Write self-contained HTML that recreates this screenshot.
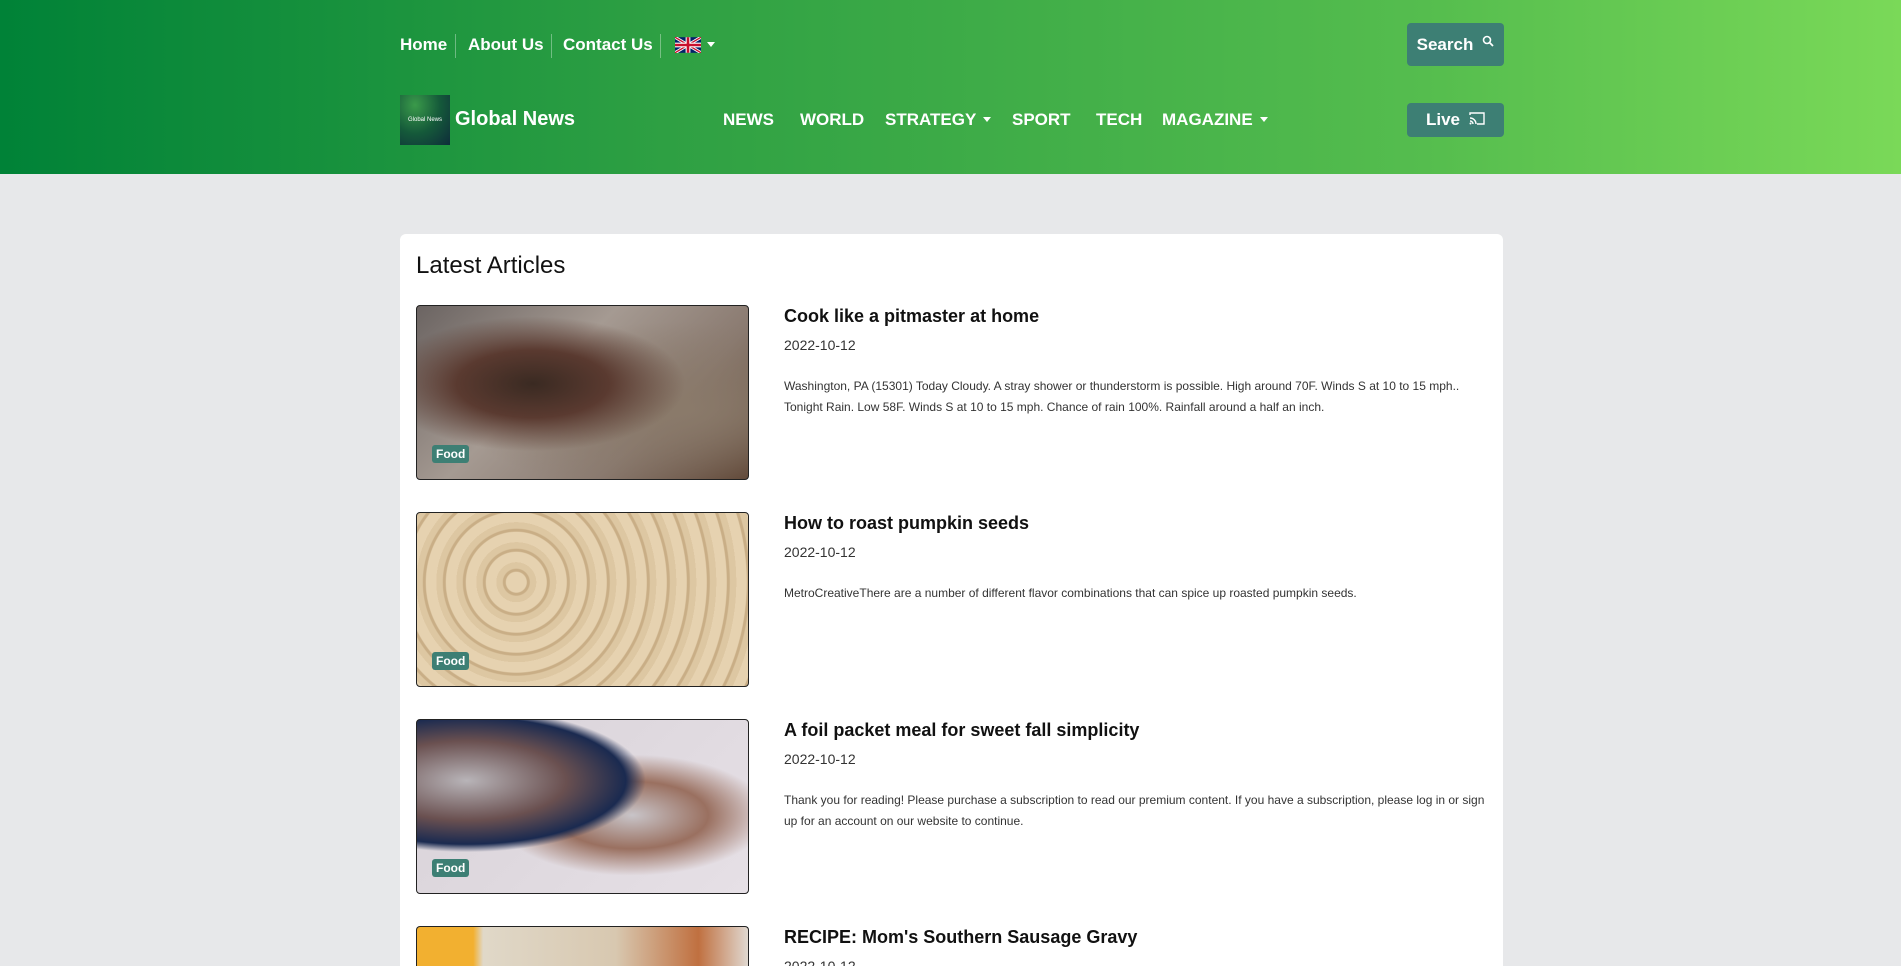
<!DOCTYPE html>
<html><head><meta charset="utf-8"><style>
*{box-sizing:border-box;margin:0;padding:0}
html,body{width:1901px;height:966px;overflow:hidden}
body{background:#e7e8ea;font-family:"Liberation Sans",Arial,sans-serif}
#w{position:relative;width:1901px;height:966px;overflow:hidden}
.hdr{position:absolute;left:0;top:0;width:1901px;height:174px;background:linear-gradient(90deg,#008237 0%,#2ea043 35%,#55bd4e 75%,#7ad958 100%)}
.a{position:absolute;color:#fff;font-weight:bold;white-space:nowrap}
.top{font-size:17px;top:35px}
.sep{position:absolute;top:34px;width:1px;height:24px;background:rgba(255,255,255,.35)}
.nav{font-size:17px;top:110px}
.caret{display:inline-block;border-left:4.5px solid transparent;border-right:4.5px solid transparent;border-top:5px solid #fff;vertical-align:middle;margin-left:7px;margin-top:-3px}
.btn{position:absolute;left:1407px;width:97px;background:#3d7f74;border-radius:4px;color:#fff;font-weight:bold;font-size:17px;display:flex;align-items:center;justify-content:center}
.card{position:absolute;left:400px;top:234px;width:1103px;height:732px;background:#fff;border-radius:6px 6px 0 0}
h2{position:absolute;left:416px;top:252px;font-size:24px;font-weight:normal;color:#111}
.img{position:absolute;left:416px;width:333px;height:175px;border:1px solid #222;border-radius:4px;overflow:hidden}
.badge{position:absolute;left:15px;bottom:16px;background:#3d7f74;color:#fff;font-size:12px;font-weight:bold;padding:2px 4px;border-radius:3px}
.t{position:absolute;left:784px;font-size:18px;font-weight:bold;color:#111}
.d{position:absolute;left:784px;font-size:14px;color:#333}
.p{position:absolute;left:784px;width:710px;font-size:12px;line-height:21px;color:#333}
</style></head><body><div id="w">
<div class="hdr"></div>
<div class="a top" style="left:400px">Home</div>
<div class="sep" style="left:455px"></div>
<div class="a top" style="left:468px">About Us</div>
<div class="sep" style="left:551px"></div>
<div class="a top" style="left:563px">Contact Us</div>
<div class="sep" style="left:660px"></div>
<svg style="position:absolute;left:675px;top:37px" width="26" height="16" viewBox="0 0 60 36"><rect width="60" height="36" fill="#012169"/><path d="M0,0L60,36M60,0L0,36" stroke="#fff" stroke-width="7"/><path d="M0,0L60,36M60,0L0,36" stroke="#C8102E" stroke-width="3"/><path d="M30,0V36M0,18H60" stroke="#fff" stroke-width="11"/><path d="M30,0V36M0,18H60" stroke="#C8102E" stroke-width="6"/></svg>
<span class="caret" style="position:absolute;left:707px;top:42px;margin:0"></span>

<div class="btn" style="top:23px;height:43px">Search <svg style="margin-left:9px;margin-top:-8px" width="12" height="12" viewBox="0 0 12 12"><circle cx="5" cy="5" r="3.5" fill="none" stroke="#fff" stroke-width="1.6"/><path d="M7.5 7.5L11 11" stroke="#fff" stroke-width="1.8"/></svg></div>
<div class="btn" style="top:103px;height:34px">Live <svg style="margin-left:9px;margin-top:-4px" width="16" height="13" viewBox="0 0 16 13"><path d="M1 3V1h14v11H8" fill="none" stroke="#fff" stroke-width="1.4"/><path d="M1 6a6 6 0 0 1 6 6M1 9a3 3 0 0 1 3 3" fill="none" stroke="#fff" stroke-width="1.4"/><circle cx="1.5" cy="11.5" r="1" fill="#fff"/></svg></div>

<div style="position:absolute;left:400px;top:95px;width:50px;height:50px;background:radial-gradient(ellipse at 30% 20%,#3a9a4a,#155a3a 50%,#0e2c3a);display:flex;align-items:center;justify-content:center;color:#fff;font-size:6px">Global News</div>
<div class="a" style="left:455px;top:108px;font-size:20px">Global News</div>

<div class="a nav" style="left:723px">NEWS</div>
<div class="a nav" style="left:800px">WORLD</div>
<div class="a nav" style="left:885px">STRATEGY<span class="caret"></span></div>
<div class="a nav" style="left:1012px">SPORT</div>
<div class="a nav" style="left:1096px">TECH</div>
<div class="a nav" style="left:1162px">MAGAZINE<span class="caret"></span></div>

<div class="card"></div>
<h2>Latest Articles</h2>

<div class="img" style="top:305px;background:radial-gradient(ellipse at 35% 45%,#3a2a22 0%,#5a3a30 25%,transparent 50%),radial-gradient(ellipse at 80% 60%,#8a7a6a,transparent 60%),linear-gradient(135deg,#6b6462,#a59a92 40%,#8a7a70 70%,#5a4030)"><span class="badge">Food</span></div>
<div class="t" style="top:306px">Cook like a pitmaster at home</div>
<div class="d" style="top:337px">2022-10-12</div>
<div class="p" style="top:376px">Washington, PA (15301) Today Cloudy. A stray shower or thunderstorm is possible. High around 70F. Winds S at 10 to 15 mph.. Tonight Rain. Low 58F. Winds S at 10 to 15 mph. Chance of rain 100%. Rainfall around a half an inch.</div>

<div class="img" style="top:512px;background:repeating-radial-gradient(circle at 30% 40%,#e6d2b0 0 10px,#c9ae86 11px 13px,#ddc7a2 14px 20px),#d8c19c"><span class="badge">Food</span></div>
<div class="t" style="top:513px">How to roast pumpkin seeds</div>
<div class="d" style="top:544px">2022-10-12</div>
<div class="p" style="top:583px">MetroCreativeThere are a number of different flavor combinations that can spice up roasted pumpkin seeds.</div>

<div class="img" style="top:719px;background:radial-gradient(ellipse at 15% 35%,#b8b4b8,#6a5050 25%,#1a2a50 40%,transparent 45%),radial-gradient(ellipse at 65% 55%,#c8c4c8,#9a7060 25%,transparent 45%),radial-gradient(ellipse at 40% 35%,#c07850 0,#c07850 12%,transparent 18%),linear-gradient(135deg,#d8d2d8,#e6e0e6)"><span class="badge">Food</span></div>
<div class="t" style="top:720px">A foil packet meal for sweet fall simplicity</div>
<div class="d" style="top:751px">2022-10-12</div>
<div class="p" style="top:790px">Thank you for reading! Please purchase a subscription to read our premium content. If you have a subscription, please log in or sign up for an account on our website to continue.</div>

<div class="img" style="top:926px;height:40px;border-bottom:none;border-radius:4px 4px 0 0;background:linear-gradient(90deg,#f2b030 0,#f2b030 17%,#e0d8c8 20%,#d8c8b0 60%,#c07040 85%,#e0d8d0)"></div>
<div class="t" style="top:927px">RECIPE: Mom's Southern Sausage Gravy</div>
<div class="d" style="top:958px;height:8px;overflow:hidden">2022-10-12</div>
</div></body></html>
